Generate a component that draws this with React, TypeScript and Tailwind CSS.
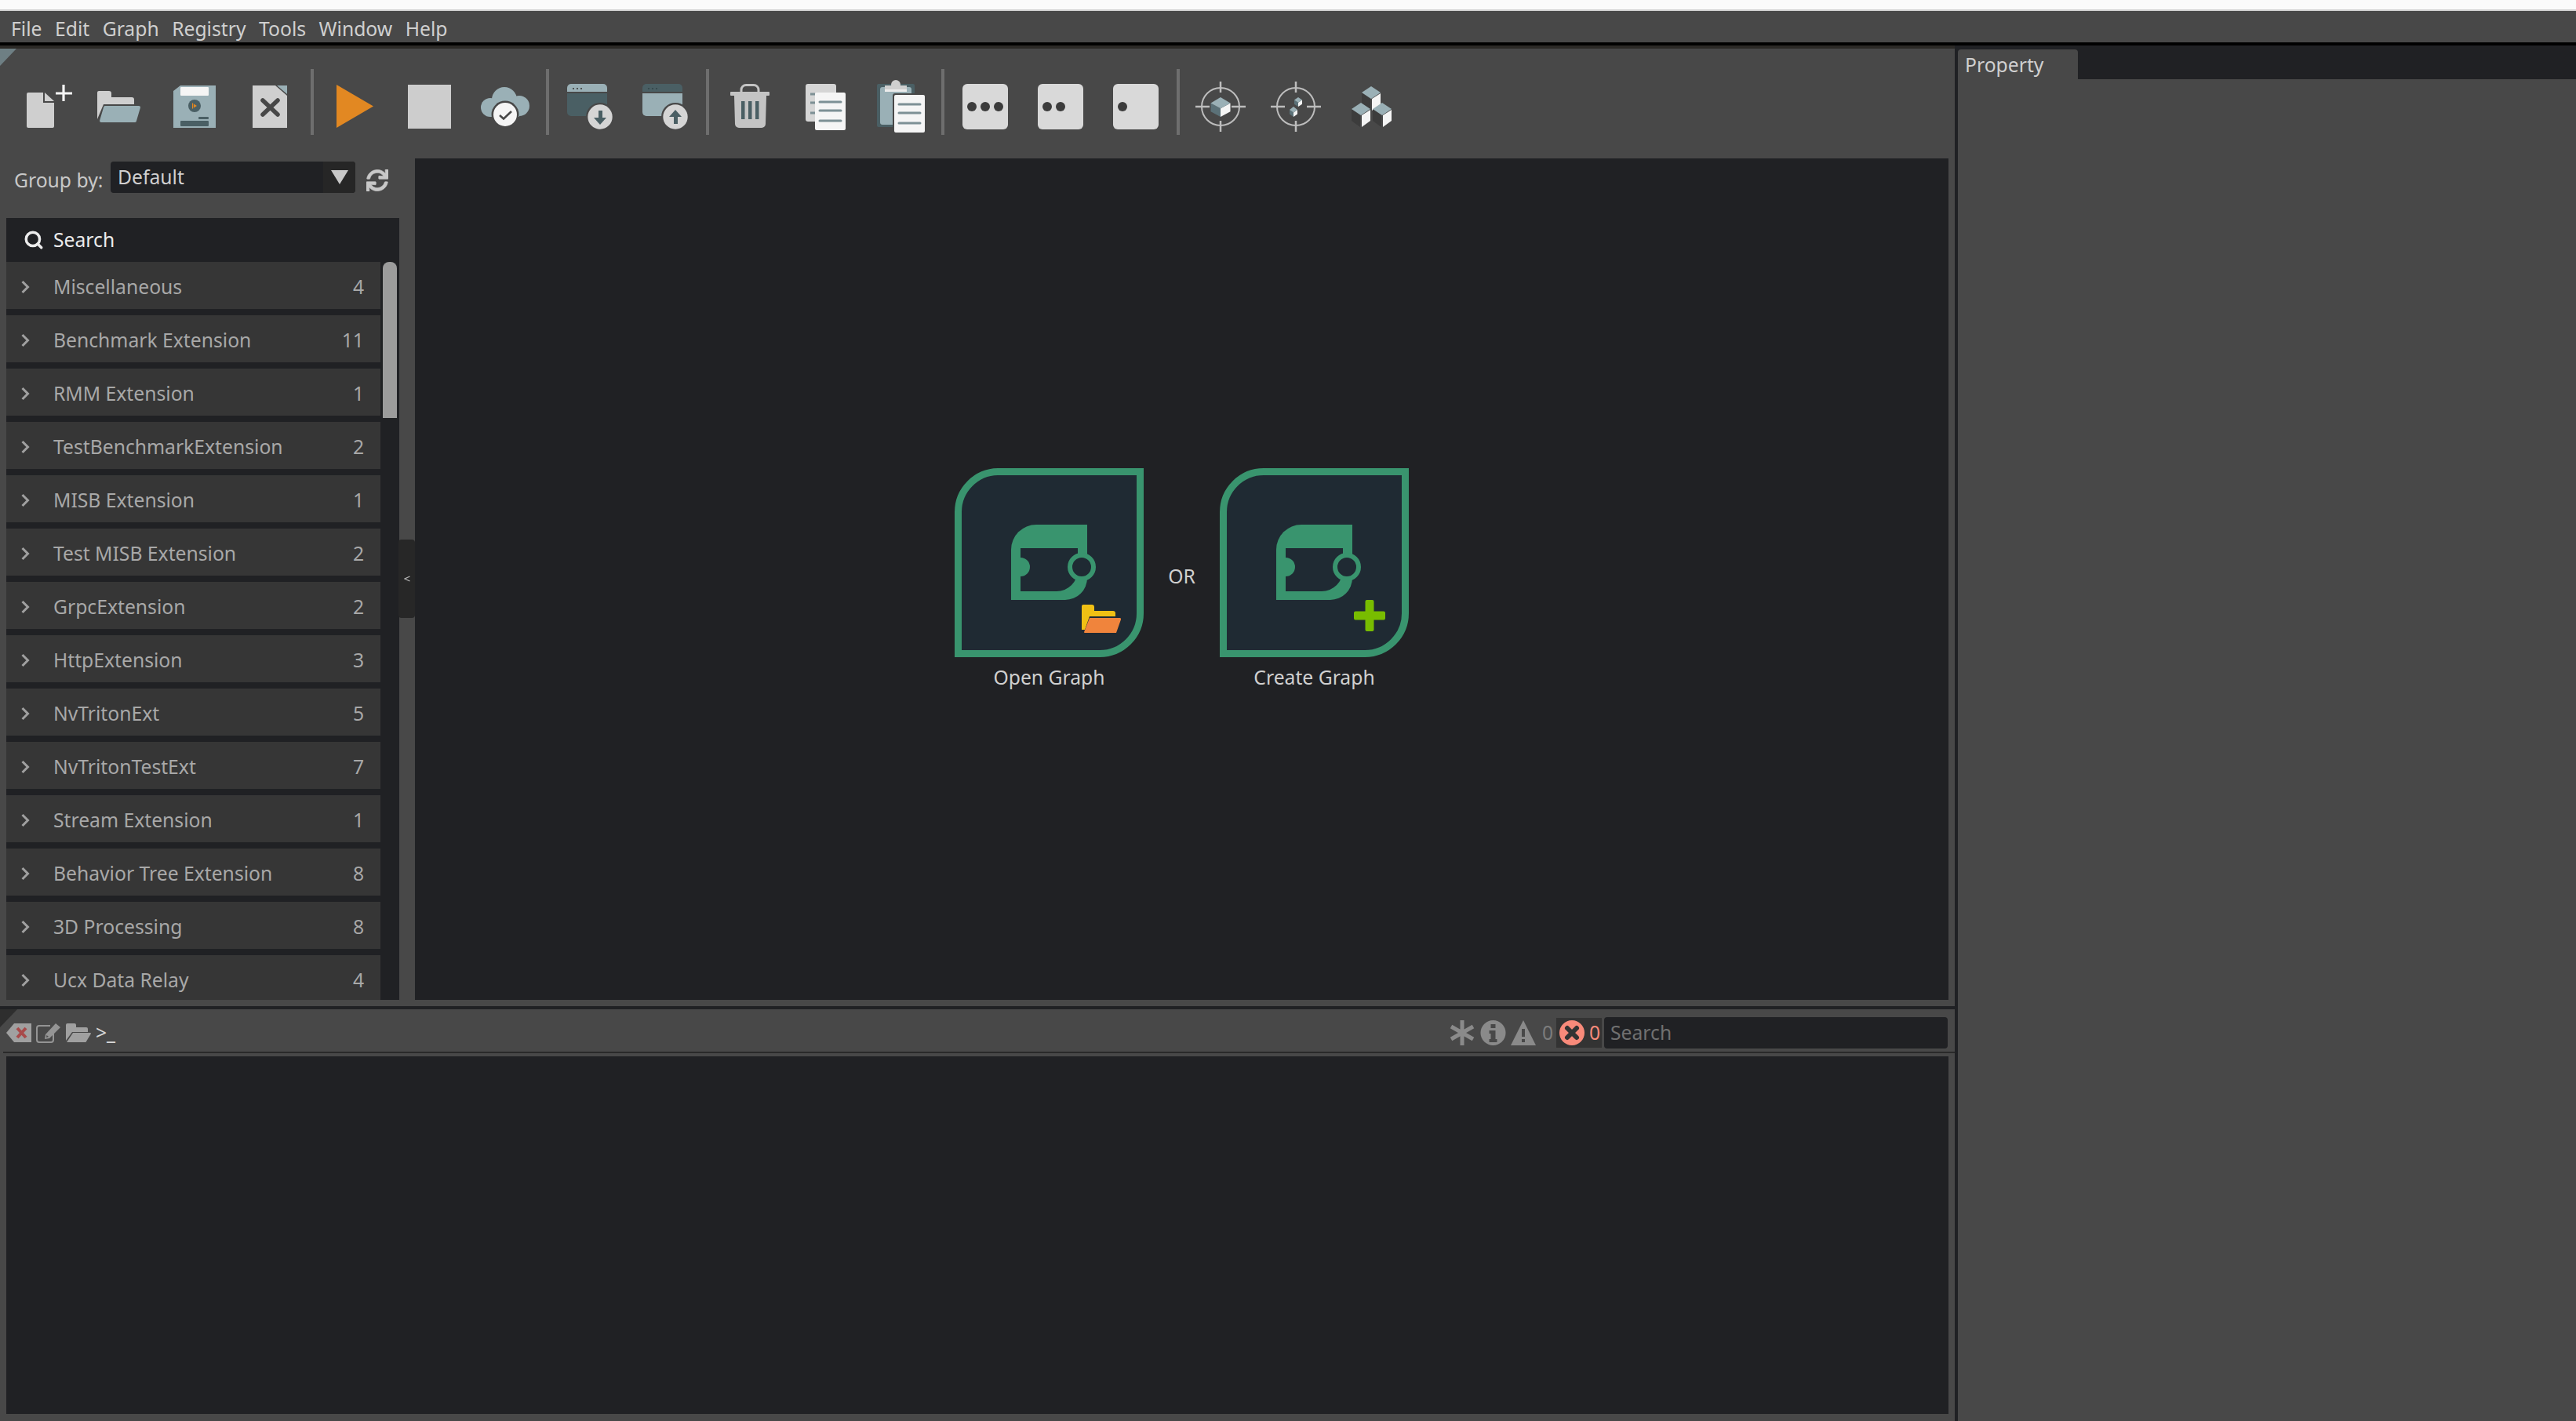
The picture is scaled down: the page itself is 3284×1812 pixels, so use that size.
import { FaSync } from 'react-icons/fa';
import { Search } from 'lucide-react';

const MENUS = ['File', 'Edit', 'Graph', 'Registry', 'Tools', 'Window', 'Help'];

const GROUPS: [string, number][] = [
  ['Miscellaneous', 4],
  ['Benchmark Extension', 11],
  ['RMM Extension', 1],
  ['TestBenchmarkExtension', 2],
  ['MISB Extension', 1],
  ['Test MISB Extension', 2],
  ['GrpcExtension', 2],
  ['HttpExtension', 3],
  ['NvTritonExt', 5],
  ['NvTritonTestExt', 7],
  ['Stream Extension', 1],
  ['Behavior Tree Extension', 8],
  ['3D Processing', 8],
  ['Ucx Data Relay', 4],
];

const BLUE = '#9ab0b6';
const SLATE = '#4a5f64';
const GREY = '#cfcfcf';
const BG = '#484848';
const PAPER = '#f5f5f5';
const LINE = '#7d9095';

function Tool({ children }: { children: React.ReactNode }) {
  return (
    <div className="flex h-[84px] w-[96px] shrink-0 items-center justify-center pt-[12px]">
      <svg viewBox="0 0 64 64" className="size-[64px] overflow-visible">
        {children}
      </svg>
    </div>
  );
}

function Sep() {
  return <div className="mx-[4px] h-[84px] w-[4px] shrink-0 bg-[#6e6e6e]" />;
}

function WindowIcon({ up }: { up?: boolean }) {
  return (
    <>
      <path d="M3 13V8a5 5 0 0 1 5-5h41a5 5 0 0 1 5 5v5z" fill={up ? SLATE : BLUE} />
      <path d="M3 15h51v24a5 5 0 0 1-5 5H8a5 5 0 0 1-5-5z" fill={up ? BLUE : SLATE} />
      <g fill={up ? '#33464a' : '#3c3c3c'}>
        <circle cx="11" cy="9" r="1.1" />
        <circle cx="16" cy="9" r="1.1" />
        <circle cx="21" cy="9" r="1.1" />
      </g>
      <circle cx="45" cy="45" r="18" fill={BG} />
      <circle cx="45" cy="45" r="15.7" fill="#d5d5d5" />
      {up ? (
        <path d="M43 54h5v-9h5l-8-9-8 9h6z" fill={SLATE} />
      ) : (
        <path d="M43 37h5v9h5l-8 9-8-9h6z" fill={SLATE} />
      )}
    </>
  );
}

function Dots({ count }: { count: number }) {
  return (
    <>
      <rect x="3" y="3" width="58" height="58" rx="6" fill="#d9d9d9" />
      {[15, 32, 49].slice(0, count).map((cx) => (
        <circle key={cx} cx={cx} cy="32" r="6" fill="#3c3c3c" />
      ))}
    </>
  );
}

function Cube({ x, y, w, h }: { x: number; y: number; w: number; h: number }) {
  const t = h * 0.3;
  return (
    <>
      <path d={`M${x - w} ${y + t} L${x} ${y + t * 1.9} V${y + h} L${x - w} ${y + h - t * 0.9}z`} fill="#5b7178" />
      <path d={`M${x} ${y + t * 1.9} L${x + w} ${y + t} V${y + h - t * 0.9} L${x} ${y + h}z`} fill={PAPER} />
      <path d={`M${x} ${y} L${x + w} ${y + t} L${x} ${y + t * 1.9} L${x - w} ${y + t}z`} fill={BLUE} />
    </>
  );
}

function Target({ children }: { children: React.ReactNode }) {
  return (
    <>
      <g fill="none" stroke="#bdbdbd">
        <circle cx="32" cy="32" r="24" strokeWidth="2" />
        <path d="M0 32h18M46 32h18M32 0v14M32 50v14" strokeWidth="2.5" />
      </g>
      {children}
    </>
  );
}

function StackCube({ x, y }: { x: number; y: number }) {
  return (
    <>
      <path d={`M${x - 12} ${y} L${x - 1} ${y + 8} V${y + 23} L${x - 12} ${y + 15}z`} fill="#3c3c3c" />
      <path d={`M${x + 1} ${y + 8} L${x + 12} ${y + 1} V${y + 15} L${x + 1} ${y + 23}z`} fill={PAPER} />
      <path d={`M${x} ${y - 8} L${x + 12} ${y} L${x} ${y + 8} L${x - 12} ${y}z`} fill={BLUE} />
    </>
  );
}

function Toolbar() {
  return (
    <div className="relative flex h-[140px] shrink-0 items-start bg-[#484848] pl-[8px] pt-[26px]">
      <svg viewBox="0 0 21 22" className="absolute left-0 top-0 h-[22px] w-[21px]">
        <path d="M0 0h21L0 22z" fill="#6e7f84" />
      </svg>
      {/* new */}
      <Tool>
        <path d="M12 14h19v13h14v30a2 2 0 0 1-2 2H12a2 2 0 0 1-2-2V16a2 2 0 0 1 2-2z" fill={GREY} />
        <path d="M33 14l12 11H33z" fill={GREY} />
        <path d="M47 15h21M57 4v21" stroke={PAPER} strokeWidth="3.2" />
      </Tool>
      {/* open */}
      <Tool>
        <path d="M6 12h13a3 3 0 0 1 3 3v5h26a3 3 0 0 1 3 3v6H12L4 48V14a2 2 0 0 1 2-2z" fill={GREY} />
        <path d="M14 31h43a2 2 0 0 1 2 2l-5 17a2 2 0 0 1-2 2H9a2 2 0 0 1-2-2l5-17a2 2 0 0 1 2-2z" fill={BLUE} />
      </Tool>
      {/* save */}
      <Tool>
        <path d="M14 5h45v54H5V12z" fill={BLUE} />
        <rect x="14" y="7" width="36" height="11" fill={PAPER} rx="1" />
        <circle cx="32" cy="31" r="8" fill={SLATE} />
        <path d="M29 27.5h1.2v7H29zM31 28.5l4 2.5-4 2.5z" fill="#e28822" />
        <rect x="37" y="45" width="13" height="3" rx="1" fill={SLATE} />
        <rect x="14" y="50" width="36" height="7" rx="1" fill={SLATE} />
      </Tool>
      {/* close */}
      <Tool>
        <path d="M10 5h29l15 13v41H10z" fill={GREY} />
        <path d="M41 5h13v11z" fill={BLUE} />
        <path d="M23 24l19 18M42 24L23 42" stroke={BG} strokeWidth="5.5" strokeLinecap="round" />
      </Tool>
      <Sep />
      <Tool>
        <path d="M9 4l47 27.5L9 59z" fill="#e28822" />
      </Tool>
      <Tool>
        <rect x="4" y="4" width="55" height="56" fill="#cdcdcd" />
      </Tool>
      {/* cloud */}
      <Tool>
        <g fill={BLUE}>
          <circle cx="31" cy="23" r="16" />
          <circle cx="13" cy="33" r="12" />
          <circle cx="50" cy="31" r="13" />
          <rect x="13" y="25" width="37" height="20" />
        </g>
        <circle cx="32" cy="42" r="17.5" fill={BG} />
        <circle cx="32" cy="42" r="15" fill={PAPER} />
        <path d="M25 43l5 4.5 10-9.5" fill="none" stroke={BG} strokeWidth="2.6" />
      </Tool>
      <Sep />
      <Tool>
        <WindowIcon />
      </Tool>
      <Tool>
        <WindowIcon up />
      </Tool>
      <Sep />
      {/* trash */}
      <Tool>
        <path d="M21 14v-3.500a6 6 0 0 1 6-6h10a6 6 0 0 1 6 6V14" fill="none" stroke="#c4c4c4" strokeWidth="3" />
        <rect x="7" y="13" width="50" height="5" rx="1" fill="#c4c4c4" />
        <path d="M12 18h41l-1 36a5 5 0 0 1-5 5H18a5 5 0 0 1-5-5z" fill="#c4c4c4" />
        <rect x="21" y="25" width="4.500" height="23" fill={SLATE} />
        <rect x="30" y="25" width="4.500" height="23" fill={SLATE} />
        <rect x="39" y="25" width="4.500" height="23" fill={SLATE} />
      </Tool>
      {/* copy */}
      <Tool>
        <rect x="7" y="3" width="39" height="48" rx="3" fill="#d5d5d5" />
        <path d="M13 16h6M13 27h6M13 40h6" stroke={LINE} strokeWidth="3" />
        <rect x="19" y="14" width="39" height="48" rx="2" fill={PAPER} />
        <path d="M25 26h27M25 37h27M25 50h27" stroke={LINE} strokeWidth="3" strokeLinecap="round" />
      </Tool>
      {/* paste */}
      <Tool>
        <rect x="2" y="3" width="48" height="55" rx="2" fill={SLATE} />
        <rect x="6" y="7" width="40" height="48" rx="3" fill={BLUE} />
        <circle cx="26" cy="4" r="6" fill={GREY} />
        <path d="M12 5h28v6H12z" fill={GREY} />
        <rect x="12" y="10" width="28" height="3" fill="#ececec" />
        <rect x="22" y="15" width="43" height="52" rx="3" fill={BG} />
        <rect x="24" y="17" width="39" height="48" rx="2" fill={PAPER} />
        <path d="M30 29h27M30 40h27M30 53h27" stroke={LINE} strokeWidth="3" strokeLinecap="round" />
      </Tool>
      <Sep />
      <Tool>
        <Dots count={3} />
      </Tool>
      <Tool>
        <Dots count={2} />
      </Tool>
      <Tool>
        <Dots count={1} />
      </Tool>
      <Sep />
      <Tool>
        <Target>
          <Cube x={32} y={20} w={12.5} h={25} />
        </Target>
      </Tool>
      <Tool>
        <Target>
          <Cube x={35} y={20} w={5} h={12} />
          <Cube x={29} y={32} w={5} h={13} />
        </Target>
      </Tool>
      {/* cubes */}
      <Tool>
        <StackCube x={32} y={14} />
        <StackCube x={19} y={35} />
        <StackCube x={46} y={35} />
      </Tool>
    </div>
  );
}

function GroupRow({ name, count }: { name: string; count: number }) {
  return (
    <div className="flex h-[60px] shrink-0 items-center bg-[#363636] pt-[3px] text-[#a8a8a8]">
      <svg viewBox="0 0 10 16" className="ml-[19px] h-[16px] w-[10px] overflow-visible">
        <path d="M1.500 1l7 7-7 7" fill="none" stroke="#a0a0a0" strokeWidth="3" />
      </svg>
      <span className="ml-[31px]">{name}</span>
      <span className="ml-auto mr-[21px]">{count}</span>
    </div>
  );
}

function LeftPanel() {
  return (
    <div className="relative flex w-[529px] shrink-0 flex-col">
      <div className="flex h-[76px] shrink-0 items-start pl-[18px] pt-[4px]">
        <span className="mt-[4px] h-[40px] w-[123px] leading-[40px] text-[#c8c8c8]">Group by:</span>
        <div className="flex h-[40px] w-[312px] items-center overflow-hidden rounded-[4px] bg-[#202124] text-[#d0d0d0]">
          <span className="ml-[9px]">Default</span>
          <div className="ml-auto flex h-full w-[41px] items-center justify-center bg-[#262626]">
            <svg viewBox="0 0 22 18" className="h-[18px] w-[22px]">
              <path d="M0 0h22L11 18z" fill="#c8c8c8" />
            </svg>
          </div>
        </div>
        <FaSync className="ml-[14px] mt-[10px] size-[28px] text-[#c8c8c8]" stroke="currentColor" strokeWidth={12} />
      </div>
      <div className="ml-[8px] flex h-[997px] w-[501px] flex-col overflow-hidden bg-[#202124]">
        <div className="flex h-[56px] shrink-0 items-center text-[#ececec]">
          <Search className="ml-[22px] size-[26px]" strokeWidth={3.2} />
          <span className="ml-[12px]">Search</span>
        </div>
        <div className="flex min-h-0 flex-1 overflow-hidden">
          <div className="flex w-[477px] shrink-0 flex-col gap-[8px]">
            {GROUPS.map(([name, count]) => (
              <GroupRow key={name} name={name} count={count} />
            ))}
          </div>
          <div className="ml-[3px] h-[199px] w-[18px] rounded-t-[8px] bg-[#9c9c9c]" />
        </div>
      </div>
      <div className="absolute left-[508px] top-[486px] flex h-[100px] w-[21px] items-center justify-center rounded-[4px] bg-[#272727]">
        <svg viewBox="0 0 8 8" className="size-[8px]">
          <path d="M7.500 1L1 4l6.500 3" fill="none" stroke="#b8b8b8" strokeWidth="1.200" />
        </svg>
      </div>
    </div>
  );
}

function GraphCard({ label, children }: { label: string; children: React.ReactNode }) {
  return (
    <div className="flex w-[241px] flex-col items-center">
      <div className="size-[241px] rounded-br-[56px] rounded-tl-[56px] border-[9px] border-[#39946e] bg-[#1f2a33]">
        <svg viewBox="9 9 223 223" className="size-full">
          <path d="M72 168V104a32 32 0 0 1 32-32h65v68a28 28 0 0 1-28 28z" fill="#39946e" />
          <path d="M84 102h73v28a27 27 0 0 1-27 27H84z" fill="#1f2a33" />
          <path d="M84 114a12 12 0 0 1 0 24z" fill="#39946e" />
          <circle cx="162" cy="126" r="15" fill="#1f2a33" stroke="#39946e" strokeWidth="6" />
          {children}
        </svg>
      </div>
      <span className="mt-[9px] leading-[34px] text-[#d0d0d0]">{label}</span>
    </div>
  );
}

function Canvas() {
  return (
    <div className="flex w-[1955px] shrink-0 items-start justify-center bg-[#202124] pt-[395px]">
      <GraphCard label="Open Graph">
        <path d="M164 174h11a3 3 0 0 1 3 3v5h24a3 3 0 0 1 3 3v4h-33l-6 17h-4v-30a2 2 0 0 1 2-2z" fill="#f0c014" />
        <path d="M172 191h39a1.500 1.500 0 0 1 1 2l-6 17h-40a1 1 0 0 1-1-1z" fill="#f0843c" />
      </GraphCard>
      <div className="flex h-[241px] w-[97px] items-center justify-center pt-[34px] text-[#d0d0d0]">OR</div>
      <GraphCard label="Create Graph">
        <path d="M185.500 170a2 2 0 0 1 2-2h7a2 2 0 0 1 2 2v12.500H209a2 2 0 0 1 2 2v7a2 2 0 0 1-2 2h-12.500V206a2 2 0 0 1-2 2h-7a2 2 0 0 1-2-2v-12.500H173a2 2 0 0 1-2-2v-7a2 2 0 0 1 2-2h12.500z" fill="#78bc00" />
      </GraphCard>
    </div>
  );
}

function Console() {
  return (
    <div className="flex min-h-0 flex-1 flex-col">
      <div className="relative flex h-[54px] shrink-0 items-center pl-[8px] pt-[6px]">
        <svg viewBox="0 0 22 23" className="absolute left-0 top-0 h-[23px] w-[22px]">
          <path d="M0 0h22L0 23z" fill="#2e2e2e" />
        </svg>
        <svg viewBox="0 0 32 24" className="h-[24px] w-[32px]">
          <path d="M10 0h22v24H10L0 12z" fill="#a0a0a0" />
          <path d="M14 6l11 12M25 6L14 18" stroke="#a84a4a" strokeWidth="4" />
        </svg>
        <svg viewBox="0 0 32 26" className="ml-[6px] h-[26px] w-[32px]">
          <path d="M18 4H4a3 3 0 0 0-3 3v15a3 3 0 0 0 3 3h15a3 3 0 0 0 3-3v-9" fill="none" stroke="#949494" strokeWidth="2" />
          <path d="M11 21l1-6L25 1l6 5-14 14z" fill="#949494" />
          <path d="M13 19l.5-3 2.500 2z" fill="#484848" />
        </svg>
        <svg viewBox="0 0 32 24" className="ml-[6px] h-[24px] w-[32px]">
          <path d="M2 0h9a2 2 0 0 1 2 2v3h13a2 2 0 0 1 2 2v4H8L0 22V2a2 2 0 0 1 2-2z" fill="#a0a0a0" />
          <path d="M9 12h22a1 1 0 0 1 1 1l-6 10a1 1 0 0 1-1 1H1z" fill="#a0a0a0" />
        </svg>
        <span className="ml-[6px] text-[#d8d8d8]">&gt;_</span>
        <div className="ml-auto flex items-center pr-[9px]">
          <svg viewBox="0 0 32 32" className="size-[32px]">
            <path d="M16 0v32M2 8l28 16M30 8L2 24" stroke="#8a8a8a" strokeWidth="5" />
          </svg>
          <svg viewBox="0 0 32 32" className="ml-[7px] h-[32px] w-[33px]">
            <circle cx="16" cy="16" r="16" fill="#8a8a8a" />
            <path d="M13 5h6v5h-6zM11 13h8v11h2v4H11v-4h2v-7h-2z" fill="#484848" />
          </svg>
          <svg viewBox="0 0 32 32" className="ml-[6px] size-[32px]">
            <path d="M16 0l16 32H0z" fill="#8a8a8a" />
            <path d="M14 11h4v10h-4zM14 24h4v4h-4z" fill="#484848" />
          </svg>
          <span className="ml-[8px] w-[14px] text-[#7c7c7c]">0</span>
          <div className="ml-[4px] flex h-[38px] w-[58px] items-center bg-[#333333] pl-[4px]">
            <svg viewBox="0 0 32 32" className="size-[32px] shrink-0">
              <circle cx="16" cy="16" r="16" fill="#f88a7a" />
              <path d="M10 10l12 12M22 10L10 22" stroke="#333333" strokeWidth="6" strokeLinecap="round" />
            </svg>
            <span className="ml-[6px] text-[#f88a7a]">0</span>
          </div>
          <div className="ml-[3px] flex h-[40px] w-[438px] items-center rounded-[4px] bg-[#202124] pl-[8px] text-[#707070]">
            Search
          </div>
        </div>
      </div>
      <div className="ml-[4px] h-[2px] shrink-0 bg-[#2a2a2a]" />
      <div className="mx-[8px] mb-[9px] mt-[4px] min-h-0 flex-1 bg-[#202124]" />
    </div>
  );
}

export default function App() {
  return (
    <div className="flex h-[1812px] w-[3284px] flex-col overflow-hidden bg-[#484848] font-['Noto_Sans',sans-serif] text-[24.7px]">
      <div className="h-[12px] shrink-0 bg-[#fbfbfb]" />
      <div className="h-[2px] shrink-0 bg-[#d0d0d0]" />
      <div className="flex h-[40px] shrink-0 items-center gap-[16.500px] px-[14px] pt-[5px] text-[#d0d0d0]">
        {MENUS.map((m) => (
          <span key={m}>{m}</span>
        ))}
      </div>
      <div className="h-[4px] shrink-0 bg-black" />
      <div className="flex min-h-0 flex-1">
        <div className="flex w-[2492px] shrink-0 flex-col">
          <div className="h-[4px] shrink-0 bg-[#2b2926]" />
          <Toolbar />
          <div className="flex h-[1073px] shrink-0">
            <LeftPanel />
            <Canvas />
          </div>
          <div className="h-[8px] shrink-0" />
          <div className="h-[4px] shrink-0 bg-[#202124]" />
          <Console />
        </div>
        <div className="w-[4px] shrink-0 bg-[#202124]" />
        <div className="flex min-w-0 flex-1 flex-col">
          <div className="flex h-[43px] shrink-0 items-end bg-[#202124]">
            <div className="flex h-[38px] w-[153px] items-center rounded-t-[4px] bg-[#484848] pl-[9px] pt-[2px] text-[#d0d0d0]">
              Property
            </div>
          </div>
          <div className="flex-1 bg-[#484848]" />
        </div>
      </div>
    </div>
  );
}
